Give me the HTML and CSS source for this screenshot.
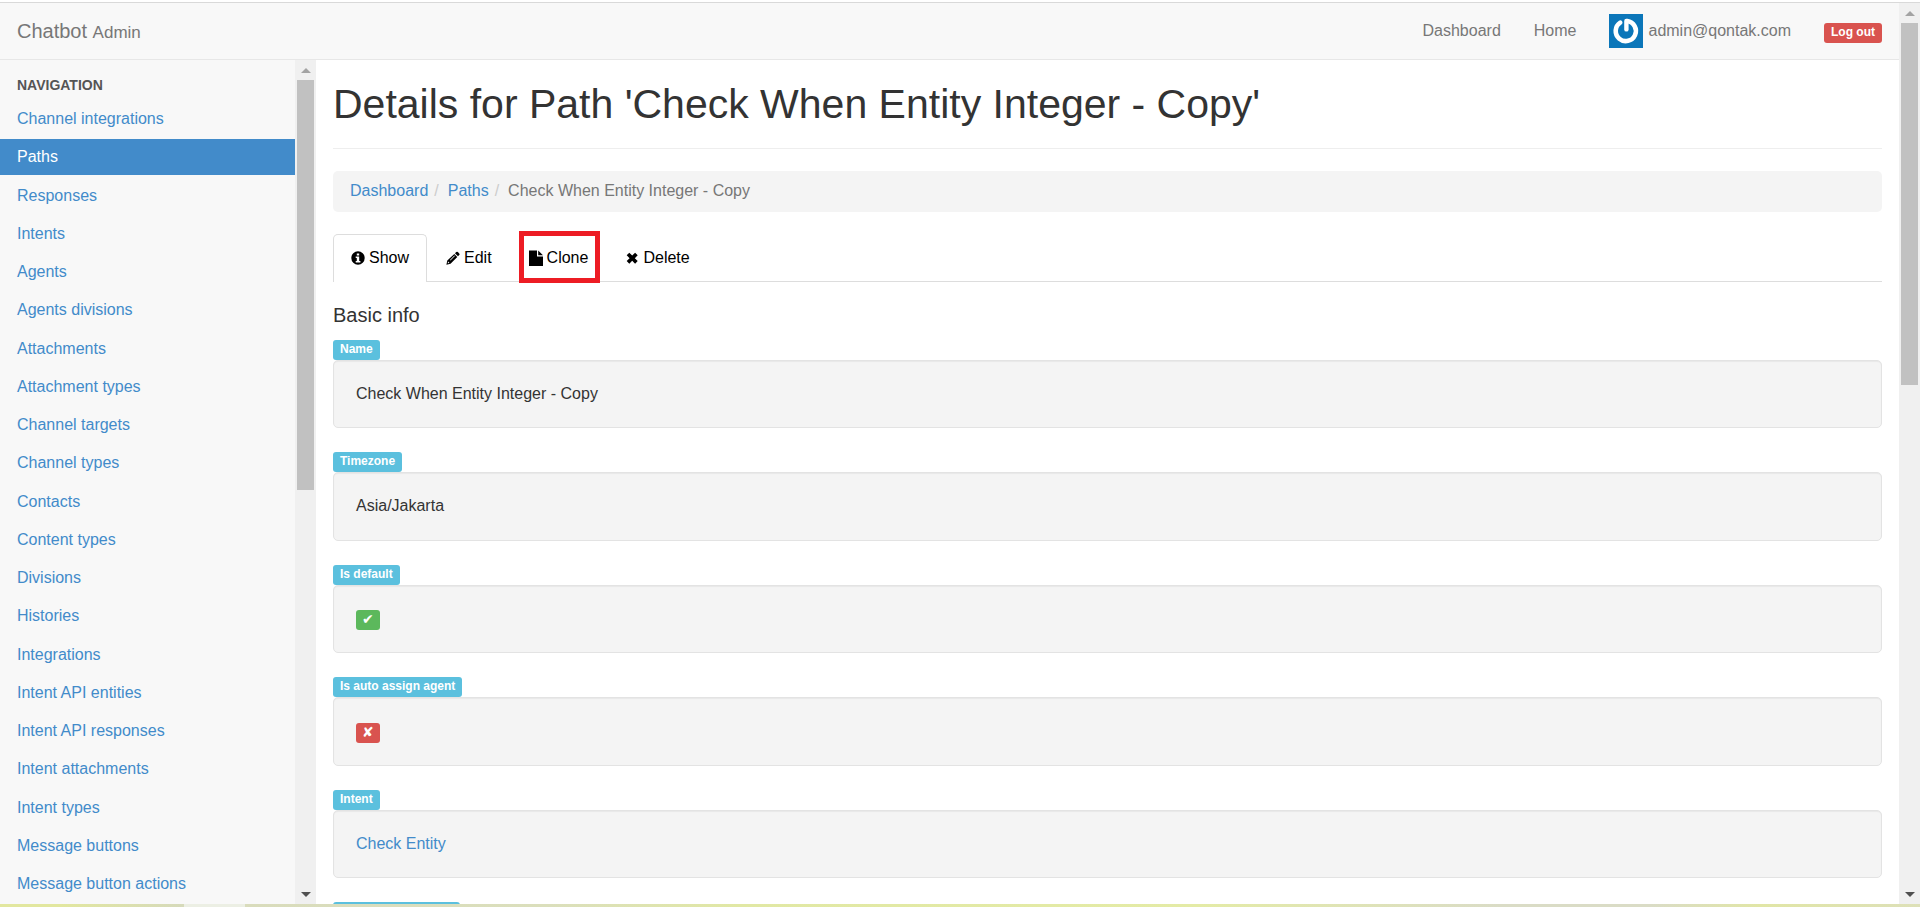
FILE: index.html
```html
<!DOCTYPE html>
<html lang="en">
<head>
<meta charset="utf-8">
<title>Details for Path 'Check When Entity Integer - Copy' | Chatbot Admin</title>
<link rel="stylesheet" href="styles.css">
</head>
<body>
<div class="window">
  <div class="page">
    <header class="navbar">
      <a class="brand" href="#">Chatbot <small>Admin</small></a>
      <nav class="navbar-links">
        <a href="#">Dashboard</a>
        <a href="#">Home</a>
        <a class="account" href="#">
          <svg class="avatar" viewBox="0 0 34 34" aria-hidden="true"><rect width="34" height="34" fill="#0b76b9"/><path d="M11.2 8.6A10.1 10.1 0 1 0 18.2 7" fill="none" stroke="#fff" stroke-width="4.6" stroke-linecap="round"/><path d="M17.4 7v8.4" fill="none" stroke="#fff" stroke-width="4.4" stroke-linecap="round"/></svg>
          <span>admin@qontak.com</span>
        </a>
        <a class="label label-danger logout" href="#">Log out</a>
      </nav>
    </header>
    <div class="columns">
      <nav class="sidebar" aria-labelledby="nav-title">
        <h2 class="sidebar-title" id="nav-title">Navigation</h2>
        <ul class="sidebar-list">
          <li><a href="#">Channel integrations</a></li>
          <li><a class="active" href="#">Paths</a></li>
          <li><a href="#">Responses</a></li>
          <li><a href="#">Intents</a></li>
          <li><a href="#">Agents</a></li>
          <li><a href="#">Agents divisions</a></li>
          <li><a href="#">Attachments</a></li>
          <li><a href="#">Attachment types</a></li>
          <li><a href="#">Channel targets</a></li>
          <li><a href="#">Channel types</a></li>
          <li><a href="#">Contacts</a></li>
          <li><a href="#">Content types</a></li>
          <li><a href="#">Divisions</a></li>
          <li><a href="#">Histories</a></li>
          <li><a href="#">Integrations</a></li>
          <li><a href="#">Intent API entities</a></li>
          <li><a href="#">Intent API responses</a></li>
          <li><a href="#">Intent attachments</a></li>
          <li><a href="#">Intent types</a></li>
          <li><a href="#">Message buttons</a></li>
          <li><a href="#">Message button actions</a></li>
        </ul>
      </nav>
      <div class="scrollbar" aria-hidden="true">
        <span class="arrow arrow-up"></span>
        <span class="track"><span class="thumb thumb-sidebar"></span></span>
        <span class="arrow arrow-down"></span>
      </div>
      <main class="content">
        <h1 class="title">Details for Path 'Check When Entity Integer - Copy'</h1>
        <ol class="breadcrumb">
          <li><a href="#">Dashboard</a></li>
          <li><a href="#">Paths</a></li>
          <li>Check When Entity Integer - Copy</li>
        </ol>
        <ul class="tabs">
          <li><a class="tab tab-active" href="#"><svg class="icon" viewBox="0 0 14 14" aria-hidden="true"><path fill-rule="evenodd" d="M7 .3a6.7 6.7 0 1 1 0 13.4A6.7 6.7 0 0 1 7 .3zM5.8 2.4v2h2.4v-2zM4.7 5.5v1.4h1.1v3.2H4.7v1.4h4.7v-1.4H8.2V5.5z"/></svg>Show</a></li>
          <li><a class="tab" href="#"><svg class="icon" viewBox="0 0 14 14" aria-hidden="true"><path fill-rule="evenodd" d="M10.2 1.100q.9-.8 1.700 0l1.300 1.300q.8.8 0 1.700L12 5.300 9 2.300zM8.300 3l3 3-6.800 6.800-4.100.9.900-4.100zM2.100 10.500l-.4 1.800 1.800-.4zM8.400 4.500L4 8.900l.5.500L8.900 5z"/></svg>Edit</a></li>
          <li><a class="tab tab-marked" href="#"><svg class="icon icon-file" viewBox="0 0 14 16" aria-hidden="true"><path d="M0 .5h8v6h6v9.500H0zM9.200.5L14 5.300H9.200z"/></svg>Clone</a></li>
          <li><a class="tab" href="#"><svg class="icon" viewBox="0 0 14 14" aria-hidden="true"><path d="M4.300 1.700L7.200 4.600 10.100 1.700 12.700 4.300 9.800 7.200l2.900 2.900-2.600 2.600-2.900-2.900-2.900 2.900-2.600-2.600 2.900-2.900-2.900-2.900z"/></svg>Delete</a></li>
        </ul>
        <h2 class="section-title">Basic info</h2>
        <dl class="fields">
          <div class="field"><dt class="label label-info">Name</dt><dd class="well">Check When Entity Integer - Copy</dd></div>
          <div class="field"><dt class="label label-info">Timezone</dt><dd class="well">Asia/Jakarta</dd></div>
          <div class="field"><dt class="label label-info">Is default</dt><dd class="well"><span class="label label-success mark">✔</span></dd></div>
          <div class="field"><dt class="label label-info">Is auto assign agent</dt><dd class="well"><span class="label label-danger mark">✘</span></dd></div>
          <div class="field"><dt class="label label-info">Intent</dt><dd class="well"><a href="#">Check Entity</a></dd></div>
          <div class="field"><dt class="label label-info">Channel integration</dt><dd class="well"></dd></div>
        </dl>
      </main>
    </div>
  </div>
  <div class="scrollbar" aria-hidden="true">
    <span class="arrow arrow-up"></span>
    <span class="track"><span class="thumb thumb-page"></span></span>
    <span class="arrow arrow-down"></span>
  </div>
</div>
<div class="desktop-edge"></div>
</body>
</html>
```

FILE: styles.css
```css
* { box-sizing: border-box; }

body {
  display: flex;
  flex-direction: column;
  height: 100vh;
  margin: 0;
  padding-top: 2px;
  overflow: hidden;
  background: #fff;
  color: #333;
  font-family: "Liberation Sans", Arial, sans-serif;
  font-size: 16px;
  line-height: 1.4;
}

a { color: #428bca; text-decoration: none; }
ul, ol, dl, dd, h1, h2 { margin: 0; padding: 0; }
ul, ol { list-style: none; }

.window {
  display: flex;
  flex: 1;
  min-height: 0;
  border-top: 1px solid #d9d9d9;
}

.page {
  display: flex;
  flex: 1;
  flex-direction: column;
  min-width: 0;
}

/* Top bar */
.navbar {
  display: flex;
  flex: none;
  align-items: center;
  justify-content: space-between;
  height: 57px;
  padding: 0 17px;
  border-bottom: 1px solid #e7e7e7;
  background: #f8f8f8;
}
.navbar a { color: #777; }
.brand { font-size: 20px; }
.brand small { font-size: 17px; }
.navbar-links { display: flex; align-items: center; gap: 33px; }
.account { display: flex; align-items: center; gap: 5px; }
.avatar { width: 34px; height: 34px; }
.navbar .logout { margin-top: 4px; color: #fff; }

/* Labels */
.label {
  display: block;
  width: fit-content;
  height: 20px;
  padding: 0 7px;
  border-radius: 3px;
  color: #fff;
  font-size: 12px;
  font-weight: bold;
  line-height: 18px;
}
.label-info { background: #5bc0de; }
.label-success { background: #5cb85c; }
.label-danger { background: #d9534f; }

/* Columns */
.columns { display: flex; flex: 1; min-height: 0; }
.sidebar {
  display: flex;
  flex: none;
  flex-direction: column;
  width: 295px;
  padding: 15px 0 2px;
  background: #f8f8f8;
}
.sidebar-title {
  padding: 0 17px 6px;
  color: #555;
  font-size: 14px;
  line-height: 20px;
  text-transform: uppercase;
}
.sidebar-list {
  display: flex;
  flex: 1;
  flex-direction: column;
  justify-content: space-between;
}
.sidebar-list a {
  display: block;
  padding: 0 17px;
  line-height: 36px;
}
.sidebar-list .active { background: #428bca; color: #fff; }

/* Scrollbars */
.scrollbar {
  display: flex;
  flex: none;
  flex-direction: column;
  align-items: center;
  width: 21px;
  background: #f0f0f0;
}
.track { flex: 1; width: 17px; }
.thumb { display: block; background: #c1c1c1; }
.thumb-sidebar { height: 51%; }
.thumb-page { height: 42%; }
.arrow { display: flex; align-items: center; justify-content: center; height: 20px; }
.arrow::before { border: 5px solid transparent; content: ""; }
.arrow-up::before { border-top: 0; border-bottom-color: #a3a3a3; }
.arrow-down::before { border-bottom: 0; border-top-color: #505050; }

/* Main column */
.content {
  flex: 1;
  min-width: 0;
  padding: 21px 17px 0;
  overflow: hidden;
}
.title {
  padding-bottom: 21px;
  border-bottom: 1px solid #eee;
  font-size: 41px;
  font-weight: normal;
  line-height: 46px;
}
.breadcrumb {
  display: flex;
  margin: 22px 0;
  padding: 0 17px 2px;
  border-radius: 5px;
  background: #f4f4f4;
  color: #777;
  line-height: 39px;
}
.breadcrumb li + li::before {
  padding: 0 9px 0 6px;
  color: #ccc;
  content: "/";
}

.tabs {
  display: flex;
  gap: 1px;
  border-bottom: 1px solid #ddd;
}
.tab {
  display: flex;
  align-items: center;
  gap: 4px;
  height: 47px;
  padding: 0 17px;
  border: 1px solid transparent;
  border-bottom: 0;
  border-radius: 5px 5px 0 0;
  color: #000;
}
.tab-active {
  height: 48px;
  margin-bottom: -1px;
  border-color: #ddd;
  background: #fff;
}
.tab-marked { position: relative; }
.tab-marked::after {
  position: absolute;
  inset: -4px 5px -2px 7px;
  border: 5px solid #ed1c24;
  content: "";
}
.icon { flex: none; width: 14px; height: 14px; margin-bottom: 1px; }
.icon-file { height: 16px; }

.section-title {
  padding: 19px 0 11px;
  font-size: 20px;
  font-weight: normal;
  line-height: 28px;
}
.field { margin-bottom: 24px; }
.well {
  padding: 22px;
  border: 1px solid #e3e3e3;
  border-radius: 5px;
  background: #f4f4f4;
  box-shadow: inset 0 1px 1px rgba(0, 0, 0, 0.05);
}
.mark {
  display: inline-block;
  padding: 0 6px;
  font-family: "DejaVu Sans", sans-serif;
  font-size: 14px;
  vertical-align: bottom;
}

.desktop-edge {
  flex: none;
  height: 3px;
  background: linear-gradient(90deg, #e2e79f 0, #e2e79f 60px, #d6dabb 184px, #ecefe4 184px, #ecefe4 245px, #d9dcbc 245px, #dbdfbc 550px, #e1e8a4 740px, #e4eba6 1200px, #dadcc6 1500px, #dadcc6 1650px, #e1e6a6 1760px, #dde0b8);
}
```
